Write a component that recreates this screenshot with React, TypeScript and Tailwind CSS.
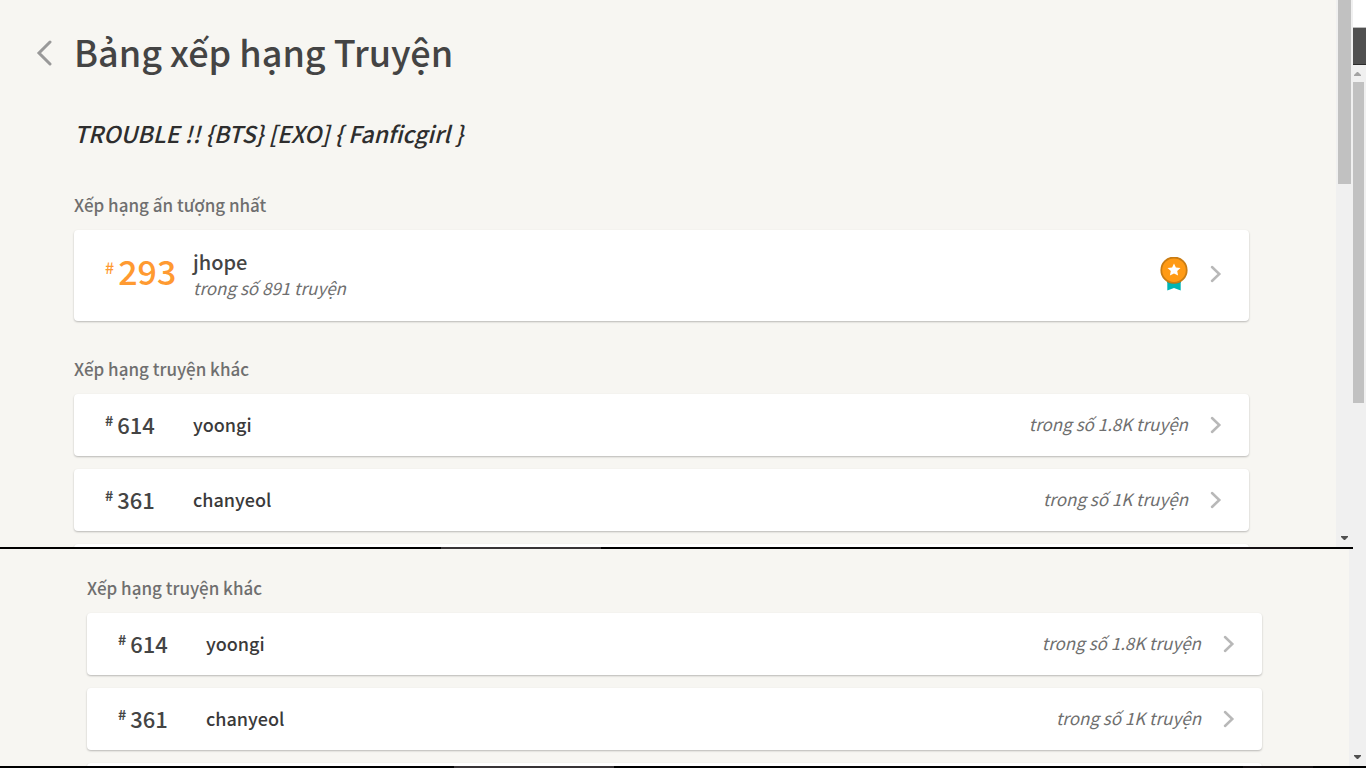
type Ranking = { rank: number; name: string; total: string };

const others: Ranking[] = [
  { rank: 614, name: "yoongi", total: "trong số 1.8K truyện" },
  { rank: 361, name: "chanyeol", total: "trong số 1K truyện" },
];

function Chevron() {
  return (
    <svg viewBox="0 0 12 18" className="h-[18px] w-3 shrink-0" fill="none" aria-hidden="true">
      <path d="M2 2 L9.3 9 L2 16" stroke="#b8b8b8" strokeWidth="2.5" strokeLinecap="round" strokeLinejoin="miter" />
    </svg>
  );
}

function Medal() {
  return (
    <svg viewBox="0 0 28 34" className="h-[34px] w-7 shrink-0" role="img" aria-label="Huy chương">
      <path d="M7.3 21 H20.7 V33.6 L14 31 L7.3 33.6 Z" fill="#00b5b5" />
      <path d="M7.3 24 H20.7 V25.8 Q14 28 7.3 25.8 Z" fill="#0b9c96" />
      <circle cx="14" cy="13.2" r="12.7" fill="#ff9a14" stroke="#c97c13" strokeWidth="1.8" />
      <path
        d="M14 6.4 L15.9 10.4 L20.5 11 L17.2 14.1 L18.1 18.6 L14 16.4 L9.9 18.6 L10.8 14.1 L7.5 11 L12.1 10.4 Z"
        fill="#ffffff"
      />
    </svg>
  );
}

function Label({ children }: { children: string }) {
  return <h3 className="text-[17px] leading-6 font-medium text-[#6f6f6f]">{children}</h3>;
}

const card =
  "flex items-center rounded-sm bg-white pr-[27px] pl-[31px] shadow-[0_1px_2px_rgba(0,0,0,0.25)]";

function OtherRankings() {
  return (
    <section>
      <Label>Xếp hạng truyện khác</Label>
      <ul className="mt-[13px] flex flex-col gap-[13px]">
        {others.map((item) => (
          <li key={item.rank}>
            <a href="#" className={`${card} h-[62px]`}>
              <span className="flex w-[88px] items-start gap-1 pb-0.5 text-[#444444]">
                <span className="text-sm leading-5 font-bold">#</span>
                <span className="text-[22px] leading-7 font-medium">{item.rank}</span>
              </span>
              <span className="flex-1 pb-0.5 text-lg leading-7 font-medium text-[#3a3a3a]">{item.name}</span>
              <span className="mr-[22px] pb-0.5 text-[17px] leading-6 text-[#6f6f6f] italic">{item.total}</span>
              <Chevron />
            </a>
          </li>
        ))}
        <li className={`${card} h-[62px]`} />
      </ul>
    </section>
  );
}

function ArrowDown() {
  return (
    <svg viewBox="0 0 7 4" className="h-1 w-[7px]" aria-hidden="true">
      <path d="M0 0 H7 V1 L4 4 H3 L0 1 Z" fill="#505050" />
    </svg>
  );
}

function Rule({ inset }: { inset: string }) {
  return (
    <div className={`flex h-0.5 shrink-0 bg-black ${inset}`}>
      <div className="w-40 bg-[#383436]" />
      <div className="ml-[629px] w-[70px] bg-[#151113]" />
    </div>
  );
}

export default function App() {
  return (
    <div className="grid h-screen grid-rows-[5fr_2fr] overflow-hidden bg-[#f0f0f0] font-['Noto_Sans_CJK_SC','Noto_Sans',sans-serif]">
      <div className="flex min-h-0">
        <div className="flex min-w-0 flex-1 flex-col">
          <div className="flex min-h-0 flex-1">
            <main className="min-w-0 flex-1 overflow-hidden bg-[#f7f6f2] pt-[27px] pr-[87px] pl-[74px]">
              <header className="-ml-[38px] flex items-center gap-[22px]">
                <button type="button" aria-label="Quay lại" className="shrink-0 pt-1">
                  <svg viewBox="0 0 16 26" className="h-[26px] w-4" fill="none" aria-hidden="true">
                    <path d="M14 2 L3 13 L14 24" stroke="#999999" strokeWidth="3" strokeLinecap="round" />
                  </svg>
                </button>
                <h1 className="text-4xl leading-12 font-medium text-[#444444]">Bảng xếp hạng Truyện</h1>
              </header>
              <h2 className="mt-[42px] text-[23px] leading-8 font-medium text-[#2e2e2e] italic">
                TROUBLE !! {"{BTS}"} [EXO] {"{ Fanficgirl }"}
              </h2>
              <section className="mt-11 mb-9">
                <Label>Xếp hạng ấn tượng nhất</Label>
                <a href="#" className={`${card} mt-[13px] h-[91px] pb-1`}>
                  <span className="flex w-[88px] items-start gap-1 pb-1.5 text-[#ff9a31]">
                    <span className="text-base leading-8 font-medium">#</span>
                    <span className="text-[34px] leading-10 font-medium">293</span>
                  </span>
                  <span className="flex flex-1 flex-col">
                    <span className="text-xl leading-7 font-medium text-[#444444]">jhope</span>
                    <span className="text-[17px] leading-6 text-[#6f6f6f] italic">trong số 891 truyện</span>
                  </span>
                  <span className="mr-[22px]">
                    <Medal />
                  </span>
                  <Chevron />
                </a>
              </section>
              <OtherRankings />
            </main>
            <div className="flex w-[17px] flex-col items-center justify-between pb-[7px]">
              <div className="h-[184px] w-[13px] bg-[#c1c1c1]" />
              <ArrowDown />
            </div>
          </div>
          <Rule inset="pl-[441px]" />
        </div>
        <div className="flex w-[13px] flex-col">
          <div className="h-[27px] bg-white" />
          <div className="h-[38px] border-t border-b border-t-[#bbbbbb] border-b-[#2c2c2c] bg-[#505050]" />
          <svg viewBox="0 0 7 4" className="mt-[7px] mb-1.5 ml-px h-1 w-[7px]" aria-hidden="true">
            <path d="M0 4 V3 L3 0 H4 L7 3 V4 Z" fill="#a3a3a3" />
          </svg>
          <div className="h-[321px] w-[11px] bg-[#c1c1c1]" />
        </div>
      </div>
      <div className="flex min-h-0 flex-col">
        <div className="flex min-h-0 flex-1">
          <div className="min-w-0 flex-1 overflow-hidden bg-[#f7f6f2] pt-[27px] pr-[87px] pl-[87px]">
            <OtherRankings />
          </div>
          <div className="flex w-[17px] flex-col items-center justify-end pb-[7px]">
            <ArrowDown />
          </div>
        </div>
        <Rule inset="pl-[454px]" />
      </div>
    </div>
  );
}
